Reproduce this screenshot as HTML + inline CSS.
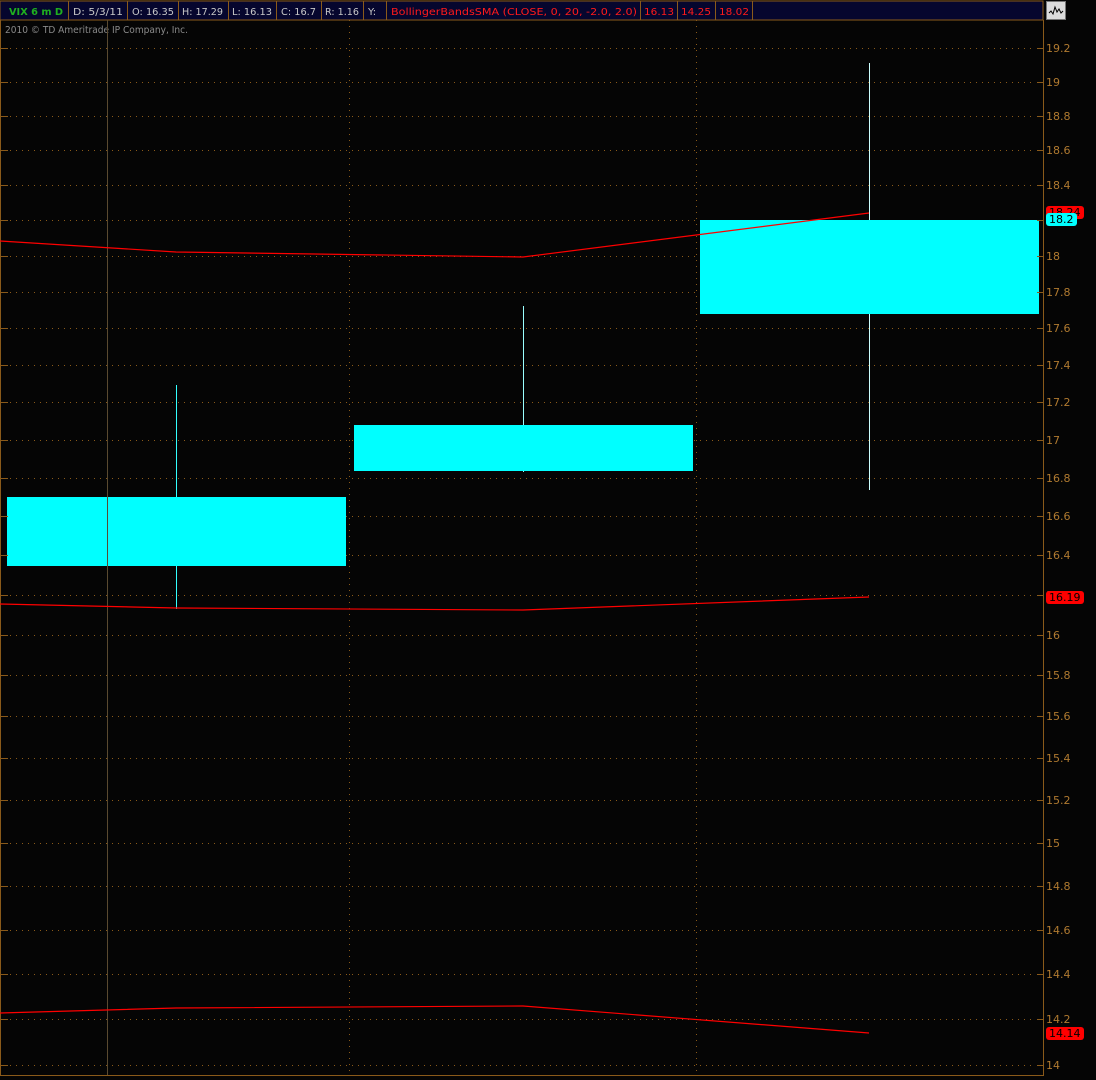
<!DOCTYPE html>
<html><head><meta charset="utf-8"><style>
html,body{margin:0;padding:0;background:#050505;width:1096px;height:1080px;overflow:hidden}
svg{display:block}
text{font-family:"DejaVu Sans","Liberation Sans",sans-serif}
</style></head><body>
<svg width="1096" height="1080" xmlns="http://www.w3.org/2000/svg">
<rect width="1096" height="1080" fill="#050505"/>
<rect x="0" y="1" width="1043" height="19" fill="#06062e" stroke="#8a5a1a" stroke-width="1"/>
<g stroke="#8a5a1a">
<line x1="68.5" y1="1" x2="68.5" y2="20"/><line x1="127.5" y1="1" x2="127.5" y2="20"/><line x1="178.5" y1="1" x2="178.5" y2="20"/><line x1="228.5" y1="1" x2="228.5" y2="20"/><line x1="276.5" y1="1" x2="276.5" y2="20"/><line x1="321.5" y1="1" x2="321.5" y2="20"/><line x1="363.5" y1="1" x2="363.5" y2="20"/><line x1="386.5" y1="1" x2="386.5" y2="20"/><line x1="640.5" y1="1" x2="640.5" y2="20"/><line x1="677.5" y1="1" x2="677.5" y2="20"/><line x1="715.5" y1="1" x2="715.5" y2="20"/><line x1="752.5" y1="1" x2="752.5" y2="20"/>
</g>
<g font-size="10" lengthAdjust="spacingAndGlyphs">
<text x="9" y="15" fill="#1fb01f" font-weight="bold" textLength="54" lengthAdjust="spacingAndGlyphs">VIX 6 m D</text>
<text x="73" y="15" fill="#c8c8c8" textLength="50" lengthAdjust="spacingAndGlyphs">D: 5/3/11</text>
<text x="132" y="15" fill="#c8c8c8" textLength="42" lengthAdjust="spacingAndGlyphs">O: 16.35</text>
<text x="182" y="15" fill="#c8c8c8" textLength="41" lengthAdjust="spacingAndGlyphs">H: 17.29</text>
<text x="232" y="15" fill="#c8c8c8" textLength="40" lengthAdjust="spacingAndGlyphs">L: 16.13</text>
<text x="281" y="15" fill="#c8c8c8" textLength="35" lengthAdjust="spacingAndGlyphs">C: 16.7</text>
<text x="325" y="15" fill="#c8c8c8" textLength="34" lengthAdjust="spacingAndGlyphs">R: 1.16</text>
<text x="368" y="15" fill="#c8c8c8">Y:</text>
<text x="391" y="15" fill="#ff1a1a" textLength="246" lengthAdjust="spacingAndGlyphs">BollingerBandsSMA (CLOSE, 0, 20, -2.0, 2.0)</text>
<text x="644" y="15" fill="#ff1a1a" textLength="30" lengthAdjust="spacingAndGlyphs">16.13</text>
<text x="681" y="15" fill="#ff1a1a" textLength="30" lengthAdjust="spacingAndGlyphs">14.25</text>
<text x="719" y="15" fill="#ff1a1a" textLength="30" lengthAdjust="spacingAndGlyphs">18.02</text>
</g>
<rect x="1046.5" y="1.5" width="19" height="18" fill="#dcdcdc" stroke="#777"/>
<polyline points="1049,13 1051,11 1053,14 1055,7 1057,12 1059,9 1061,13 1063,11" fill="none" stroke="#000" stroke-width="1"/>
<text x="5" y="33" font-size="10" fill="#8a8a8a" textLength="183" lengthAdjust="spacingAndGlyphs">2010 © TD Ameritrade IP Company, Inc.</text>
<line x1="0.5" y1="20" x2="0.5" y2="1076" stroke="#8a5a1a"/>
<line x1="1043.5" y1="20" x2="1043.5" y2="1076" stroke="#8a5a1a"/>
<line x1="0" y1="1075.5" x2="1044" y2="1075.5" stroke="#8a5a1a"/>
<g stroke="#8a5a1a" stroke-dasharray="1,5">
<line x1="349.5" y1="20" x2="349.5" y2="1075"/><line x1="696.5" y1="20" x2="696.5" y2="1075"/>
</g>
<g id="grid" stroke="#8a5a1a" stroke-dasharray="1,5" stroke-width="1"></g>
<line x1="107.5" y1="20" x2="107.5" y2="1075" stroke="#5a4a30"/>
<line x1="176.5" y1="385" x2="176.5" y2="609" stroke="#33ffff"/>
<rect x="7" y="497" width="339" height="69" fill="#00ffff"/>
<line x1="523.5" y1="306" x2="523.5" y2="472" stroke="#99ffff"/>
<rect x="354" y="425" width="339" height="46" fill="#00ffff"/>
<line x1="869.5" y1="63" x2="869.5" y2="490" stroke="#ccffff"/>
<rect x="700" y="220" width="339" height="94" fill="#00ffff"/>
<line x1="107.5" y1="497" x2="107.5" y2="566" stroke="#5a4a30"/>
<g fill="none" stroke="#ff0000" stroke-width="1.2">
<polyline points="0,241 176,252 523,257 869,213"/>
<polyline points="0,604 176,608 523,610 869,597"/>
<polyline points="0,1013 176,1008 523,1006 869,1033"/>
</g>
<g id="axis" font-size="11" fill="#b07a30"></g>
<rect x="1046" y="206" width="38" height="13" rx="3" fill="#ff0000"/>
<text x="1049" y="216" font-size="11" fill="#000">18.24</text>
<rect x="1046" y="213" width="31" height="13" rx="3" fill="#00ffff"/>
<text x="1049" y="223" font-size="11" fill="#000">18.2</text>
<rect x="1046" y="591" width="38" height="13" rx="3" fill="#ff0000"/>
<text x="1049" y="601" font-size="11" fill="#000">16.19</text>
<rect x="1046" y="1027" width="38" height="13" rx="3" fill="#ff0000"/>
<text x="1049" y="1037" font-size="11" fill="#000">14.14</text>
</svg>
<script>
var ys=[[48,"19.2"],[82,"19"],[116,"18.8"],[150,"18.6"],[185,"18.4"],[220,"18.2"],[256,"18"],[292,"17.8"],[328,"17.6"],[365,"17.4"],[402,"17.2"],[440,"17"],[478,"16.8"],[516,"16.6"],[555,"16.4"],[595,"16.2"],[635,"16"],[675,"15.8"],[716,"15.6"],[758,"15.4"],[800,"15.2"],[843,"15"],[886,"14.8"],[930,"14.6"],[974,"14.4"],[1019,"14.2"],[1065,"14"]];
var ns="http://www.w3.org/2000/svg",g=document.getElementById("grid"),a=document.getElementById("axis");
ys.forEach(function(p){var y=p[0]+0.5;
var l=document.createElementNS(ns,"line");l.setAttribute("x1",10);l.setAttribute("x2",1036);l.setAttribute("y1",y);l.setAttribute("y2",y);g.appendChild(l);
["1,8","1037,1043"].forEach(function(s){var t=document.createElementNS(ns,"line");var q=s.split(",");t.setAttribute("x1",q[0]);t.setAttribute("x2",q[1]);t.setAttribute("y1",y);t.setAttribute("y2",y);t.setAttribute("stroke","#8a5a1a");a.appendChild(t);});
if(p[1]!=="18.2"){var tx=document.createElementNS(ns,"text");tx.setAttribute("x",1046);tx.setAttribute("y",p[0]+4);tx.textContent=p[1];a.appendChild(tx);}
});
</script>
</body></html>
